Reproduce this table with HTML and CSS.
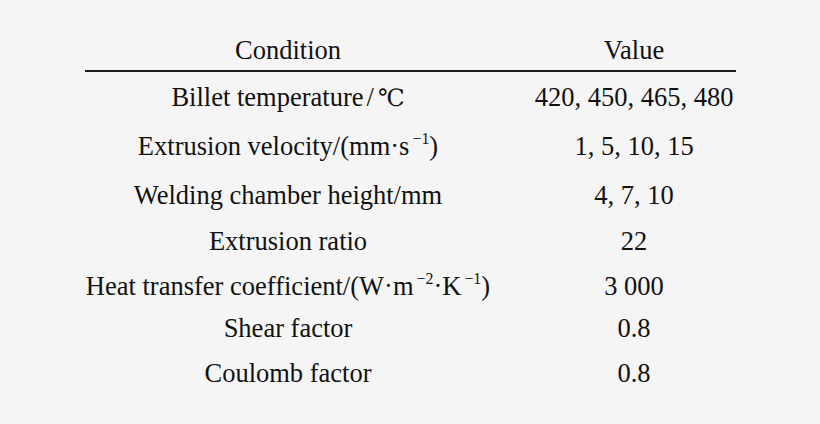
FILE: index.html
```html
<!DOCTYPE html>
<html lang="en">
<head>
<meta charset="utf-8">
<link rel="stylesheet" href="styles.css">
<title>Simulation parameters</title>
</head>
<body>
<div class="table">
  <div class="head">
    <div class="c1">Condition</div>
    <div class="c2">Value</div>
  </div>
  <div class="body">
    <div class="c1">Billet temperature<span class="slash">/</span><span class="deg">℃</span></div>
    <div class="c2">420, 450, 465, 480</div>
    <div class="c1">Extrusion velocity/(mm·s<sup>−1</sup>)</div>
    <div class="c2">1, 5, 10, 15</div>
    <div class="c1">Welding chamber height/mm</div>
    <div class="c2">4, 7, 10</div>
    <div class="c1">Extrusion ratio</div>
    <div class="c2">22</div>
    <div class="c1">Heat transfer coefficient/(W·m<sup>−2</sup>·K<sup>−1</sup>)</div>
    <div class="c2">3 000</div>
    <div class="c1">Shear factor</div>
    <div class="c2">0.8</div>
    <div class="c1">Coulomb factor</div>
    <div class="c2">0.8</div>
  </div>
</div>
</body>
</html>
```
FILE: styles.css
```css
html, body {
  margin: 0;
  padding: 0;
  background: #f5f5f5;
}
body {
  width: 820px;
  height: 424px;
  overflow: hidden;
  font-family: "Liberation Serif", "Times New Roman", serif;
  font-size: 26.5px;
  line-height: 30px;
  color: #111;
}
.table {
  margin-left: 85px;
  width: 651px;
  padding-top: 35px;
}
.head, .body {
  display: grid;
  grid-template-columns: 406px 204px;
  column-gap: 41px;
}
.head {
  height: 35px;
  border-bottom: 2px solid #1a1a1a;
}
.body {
  padding-top: 10px;
  grid-template-rows: 49px 49px 46px 45px 42px 45px 30px;
}
.c1, .c2 {
  text-align: center;
  white-space: nowrap;
}
sup {
  font-size: 0.6em;
  line-height: 0;
  vertical-align: 0.72em;
  margin-left: 3px;
}
.slash {
  margin: 0 4px 0 3px;
}
.deg {
  font-family: "DejaVu Serif", "Noto Sans CJK SC", serif;
  font-size: 0.9em;
}
```
